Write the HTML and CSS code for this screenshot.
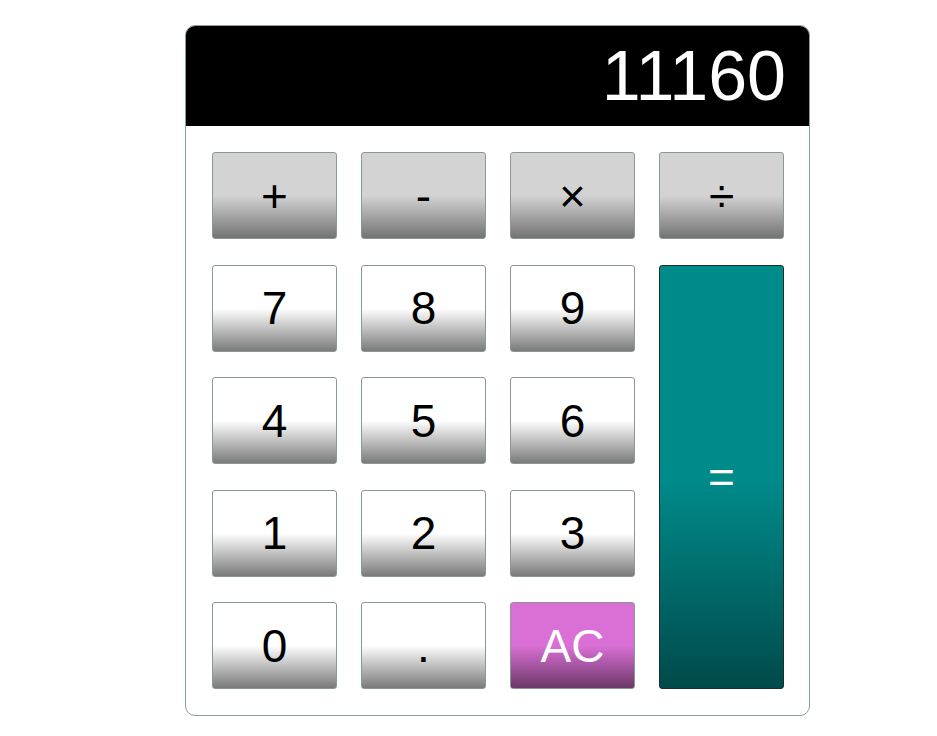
FILE: index.html
```html
<!DOCTYPE html>
<html lang="en">
<head>
<meta charset="utf-8">
<title>Calculator</title>
<link rel="stylesheet" href="styles.css">
</head>
<body>
<div class="calculator">
  <div class="display">11160</div>
  <div class="keys">
    <button class="key op">+</button>
    <button class="key op">-</button>
    <button class="key op">×</button>
    <button class="key op">÷</button>
    <button class="key">7</button>
    <button class="key">8</button>
    <button class="key">9</button>
    <button class="key equals">=</button>
    <button class="key">4</button>
    <button class="key">5</button>
    <button class="key">6</button>
    <button class="key">1</button>
    <button class="key">2</button>
    <button class="key">3</button>
    <button class="key">0</button>
    <button class="key">.</button>
    <button class="key clear">AC</button>
  </div>
</div>
</body>
</html>
```
FILE: styles.css
```css
html, body {
  margin: 0;
  padding: 0;
  background: #ffffff;
}

body {
  font-family: "Liberation Sans", Arial, sans-serif;
}

.calculator {
  width: 623px;
  margin: 25px 0 0 185px;
  border: 1px solid #8e9c9c;
  border-radius: 10px;
  overflow: hidden;
  background: #ffffff;
}

.display {
  height: 100px;
  background: #000000;
  color: #ffffff;
  font-size: 70px;
  line-height: 100px;
  text-align: right;
  padding-right: 23px;
  box-sizing: border-box;
}

.keys {
  display: grid;
  grid-template-columns: repeat(4, 125px);
  grid-template-rows: repeat(5, 87px);
  column-gap: 24px;
  row-gap: 25.5px;
  padding: 26px 25px 26px 26px;
}

.key {
  margin: 0;
  padding: 0;
  border: 1px solid #8a9797;
  border-radius: 3px;
  font-family: "Liberation Sans", Arial, sans-serif;
  font-size: 46px;
  color: #000000;
  background: linear-gradient(to bottom, #ffffff 0%, #ffffff 50%, #7a7a7a 100%);
  cursor: pointer;
}

.key.op {
  background: linear-gradient(to bottom, #d3d3d3 0%, #d3d3d3 50%, #737373 100%);
}

.key.equals {
  grid-column: 4;
  grid-row: 2 / span 4;
  color: #ffffff;
  border-color: #1e2e2e;
  background: linear-gradient(to bottom, #008b8b 0%, #008b8b 50%, #004a4a 100%);
}

.key.clear {
  color: #ffffff;
  background: linear-gradient(to bottom, #da70d6 0%, #da70d6 50%, #6b3868 100%);
}
```
